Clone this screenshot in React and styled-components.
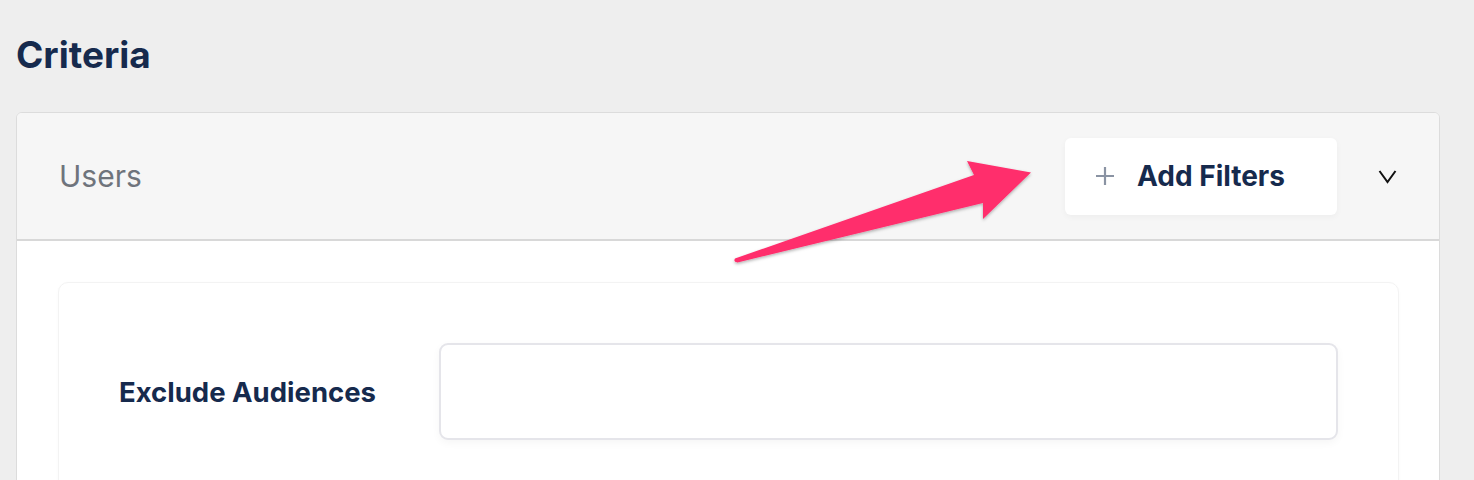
import React from "react";
import styled, { createGlobalStyle } from "styled-components";

const Global = createGlobalStyle`
  html, body { margin: 0; padding: 0; background: #eeeeee; }
  body { font-family: Inter, "Noto Sans", sans-serif; overflow: hidden; }
`;

const Page = styled.div`
  position: relative;
  display: flex;
  flex-direction: column;
  gap: 35px;
  padding: 33px 34px 0 16px;
  min-height: 480px;
  box-sizing: border-box;
`;

const Title = styled.h1`
  margin: 0;
  font-size: 37px;
  line-height: 44px;
  font-weight: 700;
  color: #162a4d;
`;

const Card = styled.section`
  background: #ffffff;
  border: 1px solid #dcdcdc;
  border-radius: 6px;
  overflow: hidden;
`;

const Header = styled.div`
  display: flex;
  align-items: center;
  height: 126px;
  padding: 0 42px 0 42px;
  background: #f6f6f6;
  border-bottom: 2px solid #d8d8d8;
`;

const HeaderLabel = styled.div`
  flex: 1;
  font-size: 30px;
  color: #6f747c;
  font-weight: 400;
`;

const AddButton = styled.button`
  display: flex;
  align-items: center;
  gap: 22px;
  width: 272px;
  height: 77px;
  padding: 0 0 0 30px;
  box-sizing: border-box;
  border: none;
  border-radius: 6px;
  background: #ffffff;
  box-shadow: 0 2px 6px rgba(0, 0, 0, 0.04);
  font-family: inherit;
  font-size: 28px;
  font-weight: 700;
  color: #162a4d;
  cursor: pointer;
`;

const Toggle = styled.div`
  display: flex;
  align-items: center;
  justify-content: center;
  margin-left: 41px;
  width: 19px;
  height: 19px;
`;

const Body = styled.div`
  padding: 41px 40px 40px 41px;
`;

const InnerCard = styled.div`
  border: 1px solid #f3f3f3;
  border-radius: 10px;
  box-shadow: 0 1px 4px rgba(0, 0, 0, 0.02);
  padding: 60px 60px 60px 60px;
`;

const FieldRow = styled.div`
  display: flex;
  align-items: center;
`;

const FieldLabel = styled.label`
  width: 320px;
  flex: none;
  font-size: 27.5px;
  font-weight: 700;
  color: #162a4d;
`;

const Input = styled.div`
  flex: 1;
  height: 97px;
  box-sizing: border-box;
  border: 2px solid #e5e5ea;
  border-radius: 9px;
  background: #fff;
  box-shadow: 0 3px 8px rgba(0, 0, 0, 0.04);
`;

const ArrowOverlay = styled.svg`
  position: absolute;
  left: 0;
  top: 0;
  pointer-events: none;
  overflow: visible;
`;

export default function App() {
  return (
    <>
      <Global />
      <Page>
        <Title>Criteria</Title>
        <Card>
          <Header>
            <HeaderLabel>Users</HeaderLabel>
            <AddButton>
              <svg width="20" height="20" viewBox="0 0 20 20">
                <path d="M10 1v18M1 10h18" stroke="#8a93a3" strokeWidth="2.2" fill="none" />
              </svg>
              Add Filters
            </AddButton>
            <Toggle>
              <svg width="19" height="15" viewBox="0 0 19 15">
                <path d="M1.5 2l8 11 8-11" stroke="#111" strokeWidth="2" fill="none" strokeLinejoin="miter" />
              </svg>
            </Toggle>
          </Header>
          <Body>
            <InnerCard>
              <FieldRow>
                <FieldLabel>Exclude Audiences</FieldLabel>
                <Input />
              </FieldRow>
            </InnerCard>
          </Body>
        </Card>
        <ArrowOverlay width="1474" height="480">
          <defs>
            <filter id="sh" x="-10%" y="-10%" width="120%" height="130%">
              <feDropShadow dx="0" dy="1.5" stdDeviation="1.5" floodColor="#000" floodOpacity="0.3" />
            </filter>
          </defs>
          <path
            d="M735 258.5 L974 175 L967 161 L1031 172.5 L983 219 L983 203 L737.5 262.5 Q733 262 735 258.5 Z"
            fill="#ff2d6c"
            filter="url(#sh)"
          />
        </ArrowOverlay>
      </Page>
    </>
  );
}
